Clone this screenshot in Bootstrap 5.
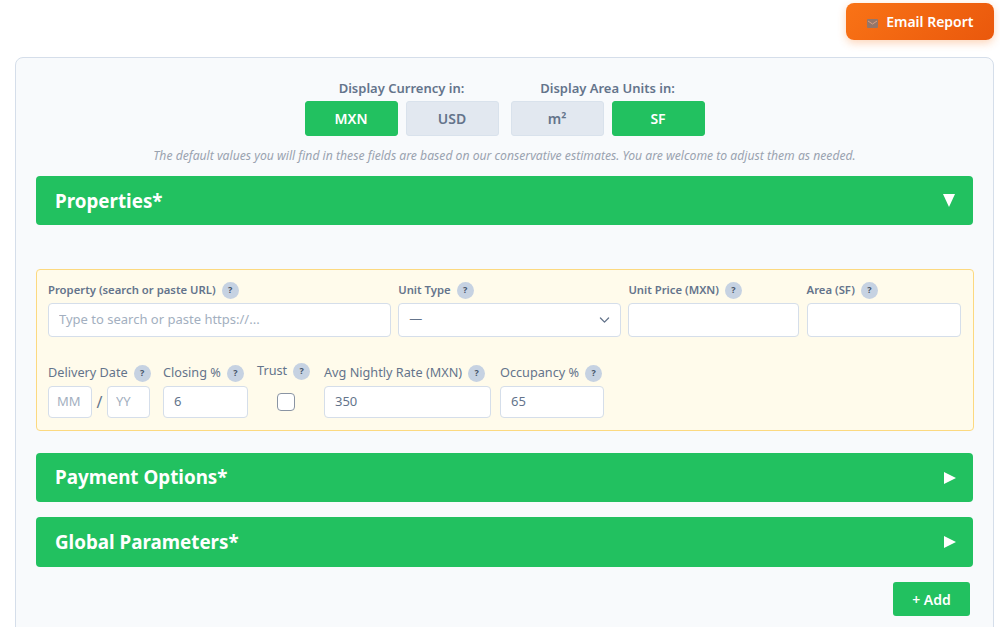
<!DOCTYPE html>
<html>
<head>
    <meta charset="UTF-8">
    <title>Report</title>
    <meta name="viewport" content="width=device-width, initial-scale=1">
    <link rel="stylesheet" href="https://cdn.jsdelivr.net/npm/bootstrap@5.3.3/dist/css/bootstrap.min.css">
    <style>
        html, body {
            height: 627px;
            overflow: hidden;
        }
        body {
            font-family: "Noto Sans", "Open Sans", sans-serif;
            background: #fff;
            color: #64748b;
        }
        .page-wrap {
            padding: 3px 6px 0 15px;
        }
        .btn-email {
            width: 148px;
            height: 37px;
            border: 0;
            border-radius: 8px;
            color: #fff;
            font-size: 14px;
            font-weight: 600;
            background: linear-gradient(135deg, #f97316, #ea580c);
            box-shadow: 0 3px 8px rgba(249, 115, 22, .3);
        }
        .btn-email svg {
            margin-right: 5px;
            vertical-align: -1px;
        }
        .main-panel {
            margin-top: 17px;
            height: 600px;
            padding: 0 20px;
            background: #f8fafc;
            border: 1px solid #d5deea;
            border-radius: 8px;
        }
        .unit-row {
            padding-top: 22px;
        }
        .unit-label {
            font-size: 13px;
            font-weight: 600;
            line-height: 17px;
            margin-bottom: 4px;
            color: #64748b;
        }
        .unit-btn {
            width: 93px;
            height: 35px;
            padding: 0;
            border-radius: 3px;
            font-size: 14px;
            font-weight: 600;
            background: #e2e8f0;
            border: 1px solid #d9e2ec;
            color: #64748b;
        }
        .unit-btn.is-on {
            background: #22c160;
            border-color: #22c160;
            color: #fff;
        }
        .hint-line {
            font-size: 12.18px;
            font-style: italic;
            color: #9aa3b0;
            line-height: 14px;
            margin: 13px 0 13px;
        }
        .section-bar {
            display: flex;
            align-items: center;
            justify-content: space-between;
            height: 49px;
            padding: 0 16px 0 19px;
            background: #22c160;
            border-radius: 4px;
            color: #fff;
            font-size: 18.8px;
            font-weight: 700;
        }
        .section-bar.is-open > span:first-child {
            position: relative;
            top: 1px;
        }
        .section-bar .arrow-down {
            width: 0;
            height: 0;
            margin-right: 2px;
            border-left: 6.5px solid transparent;
            border-right: 6.5px solid transparent;
            border-top: 13px solid #fff;
        }
        .section-bar .arrow-right {
            width: 0;
            height: 0;
            margin-right: 1px;
            border-top: 6px solid transparent;
            border-bottom: 6px solid transparent;
            border-left: 12px solid #fff;
        }
        .property-box {
            margin: 44px 0 22px;
            height: 162px;
            width: 938px;
            padding: 11px 11px 0;
            background: #fffbeb;
            border: 1px solid #fcd980;
            border-radius: 4px;
        }
        .field-label {
            display: flex;
            align-items: center;
            gap: 6px;
            height: 18px;
            font-size: 11.3px;
            font-weight: 600;
            color: #64748b;
            white-space: nowrap;
        }
        .field-label.plain {
            font-size: 12.7px;
            font-weight: 400;
        }
        .help-dot {
            display: inline-flex;
            align-items: center;
            justify-content: center;
            width: 17px;
            height: 17px;
            border-radius: 50%;
            background: #c6d2e2;
            color: #475569;
            font-size: 9px;
            font-weight: 700;
            flex: none;
        }
        .form-control.fld, .form-select.fld {
            height: 34px;
            margin-top: 4px;
            padding: 0 10px 2px;
            font-size: 13px;
            color: #64748b;
            border: 1px solid #d5deea;
            border-radius: 4px;
            box-shadow: none;
        }
        .form-control.fld.short {
            height: 32px;
        }
        .form-control.fld::placeholder {
            color: #a3afc0;
        }
        .form-select.fld {
            background-image: url("data:image/svg+xml,%3csvg xmlns='http://www.w3.org/2000/svg' viewBox='0 0 16 16'%3e%3cpath fill='none' stroke='%2364748b' stroke-linecap='round' stroke-linejoin='round' stroke-width='1.6' d='m3 5 5 5 5-5'/%3e%3c/svg%3e");
            background-size: 13px 13px;
            background-position: right 9px center;
        }
        .row-one {
            display: grid;
            grid-template-columns: 343px 223px 171px 154px;
            column-gap: 7.2px;
        }
        .row-two {
            display: flex;
            margin-top: 27px;
        }
        .col-date { flex: none; width: 102px; }
        .col-closing { flex: none; width: 85px; margin-left: 13px; }
        .col-trust { flex: none; width: 47px; margin-left: 9px; }
        .col-rate { flex: none; width: 167px; margin-left: 20px; }
        .col-occ { flex: none; width: 104px; margin-left: 9px; }
        .date-part {
            flex: none;
            width: 44px;
            padding: 0 8px 2px !important;
        }
        .date-part.is-year {
            width: 43px;
        }
        .date-sep {
            flex: none;
            width: 15px;
            margin-top: 4px;
            text-align: center;
            font-size: 16px;
            line-height: 32px;
        }
        .trust-label {
            margin-top: -2px;
        }
        .trust-check {
            width: 18px;
            height: 18px;
            margin: 13px 0 0 20px;
            display: block;
            border: 1.5px solid #8a94a3;
            border-radius: 3px;
            box-shadow: none;
        }
        .gap-bar {
            margin-top: 15px;
            height: 50px;
        }
        .btn-add {
            width: 77px;
            height: 34px;
            padding: 0;
            margin: 15px 3px 0 0;
            border: 0;
            border-radius: 3px;
            font-size: 14px;
            font-weight: 600;
            background: #22c160;
            color: #fff;
        }
    </style>
</head>
<body>
    <div class="page-wrap">
        <div class="d-flex justify-content-end">
            <button type="button" class="btn btn-email">
                <svg width="11" height="9" viewBox="0 0 11 9"><rect width="11" height="9" rx="1" fill="#94766a"/><path d="M1 2l4.5 3L10 2" fill="none" stroke="#d9a184" stroke-width="1"/></svg>
                Email Report
            </button>
        </div>

        <div class="main-panel">
            <div class="d-flex justify-content-center unit-row">
                <div class="text-center me-2">
                    <div class="unit-label">Display Currency in:</div>
                    <div class="d-flex gap-2">
                        <button type="button" class="btn unit-btn is-on">MXN</button>
                        <button type="button" class="btn unit-btn">USD</button>
                    </div>
                </div>
                <div class="text-center ms-1">
                    <div class="unit-label">Display Area Units in:</div>
                    <div class="d-flex gap-2">
                        <button type="button" class="btn unit-btn">m²</button>
                        <button type="button" class="btn unit-btn is-on">SF</button>
                    </div>
                </div>
            </div>

            <p class="hint-line text-center">The default values you will find in these fields are based on our conservative estimates. You are welcome to adjust them as needed.</p>

            <div class="section-bar is-open"><span>Properties*</span><span class="arrow-down"></span></div>

            <div class="property-box">
                <div class="row-one">
                    <div>
                        <label class="field-label">Property (search or paste URL) <span class="help-dot">?</span></label>
                        <input type="text" class="form-control fld" placeholder="Type to search or paste https://...">
                    </div>
                    <div>
                        <label class="field-label">Unit Type <span class="help-dot">?</span></label>
                        <select class="form-select fld"><option>—</option></select>
                    </div>
                    <div>
                        <label class="field-label">Unit Price (MXN) <span class="help-dot">?</span></label>
                        <input type="text" class="form-control fld">
                    </div>
                    <div>
                        <label class="field-label">Area (SF) <span class="help-dot">?</span></label>
                        <input type="text" class="form-control fld">
                    </div>
                </div>
                <div class="row-two">
                    <div class="col-date">
                        <label class="field-label plain">Delivery Date <span class="help-dot">?</span></label>
                        <div class="d-flex">
                            <input type="text" class="form-control fld short date-part" placeholder="MM">
                            <span class="date-sep">/</span>
                            <input type="text" class="form-control fld short date-part is-year" placeholder="YY">
                        </div>
                    </div>
                    <div class="col-closing">
                        <label class="field-label plain">Closing % <span class="help-dot">?</span></label>
                        <input type="text" class="form-control fld short" value="6">
                    </div>
                    <div class="col-trust">
                        <label class="field-label plain trust-label">Trust <span class="help-dot">?</span></label>
                        <input type="checkbox" class="form-check-input trust-check">
                    </div>
                    <div class="col-rate">
                        <label class="field-label plain">Avg Nightly Rate (MXN) <span class="help-dot">?</span></label>
                        <input type="text" class="form-control fld short" value="350">
                    </div>
                    <div class="col-occ">
                        <label class="field-label plain">Occupancy % <span class="help-dot">?</span></label>
                        <input type="text" class="form-control fld short" value="65">
                    </div>
                </div>
            </div>

            <div class="section-bar"><span>Payment Options*</span><span class="arrow-right"></span></div>
            <div class="section-bar gap-bar"><span>Global Parameters*</span><span class="arrow-right"></span></div>
            <div class="d-flex justify-content-end">
                <button type="button" class="btn btn-add">+ Add</button>
            </div>
        </div>
    </div>
    <script src="https://cdn.jsdelivr.net/npm/bootstrap@5.3.3/dist/js/bootstrap.bundle.min.js"></script>
</body>
</html>
